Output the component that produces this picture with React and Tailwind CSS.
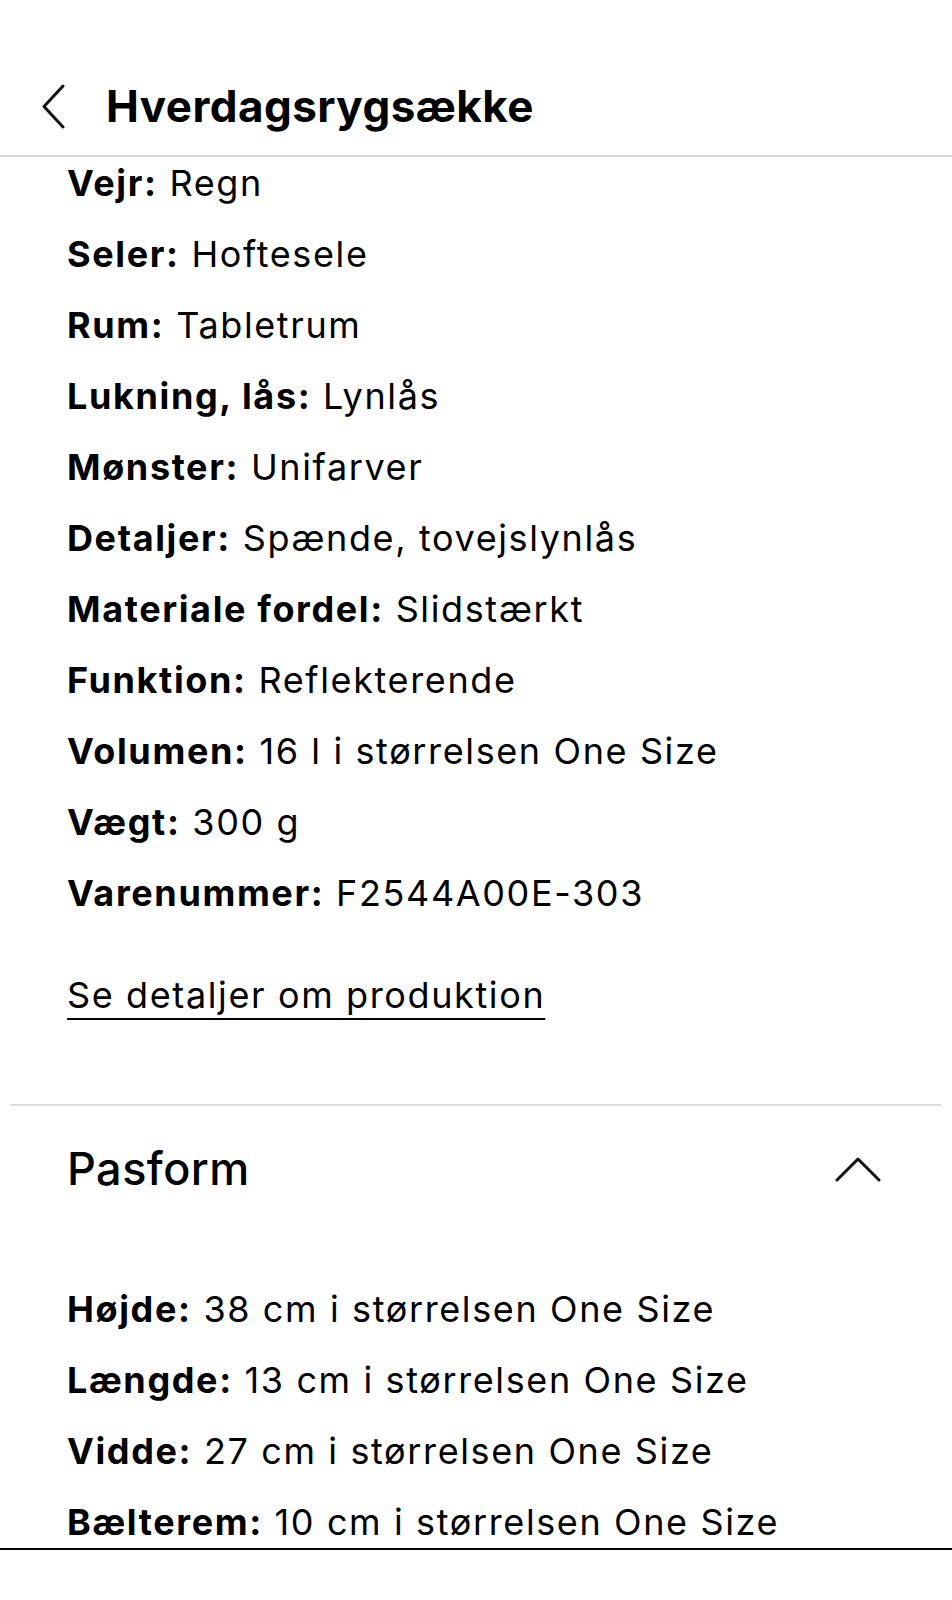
import React from "react";

const details = [
  ["Vejr:", "Regn"],
  ["Seler:", "Hoftesele"],
  ["Rum:", "Tabletrum"],
  ["Lukning, lås:", "Lynlås"],
  ["Mønster:", "Unifarver"],
  ["Detaljer:", "Spænde, tovejslynlås"],
  ["Materiale fordel:", "Slidstærkt"],
  ["Funktion:", "Reflekterende"],
  ["Volumen:", "16 l i størrelsen One Size"],
  ["Vægt:", "300 g"],
  ["Varenummer:", "F2544A00E-303"],
];

const fit = [
  ["Højde:", "38 cm i størrelsen One Size"],
  ["Længde:", "13 cm i størrelsen One Size"],
  ["Vidde:", "27 cm i størrelsen One Size"],
  ["Bælterem:", "10 cm i størrelsen One Size"],
];

const Row = ({ label, value }) => (
  <div className="h-[71px] flex items-center whitespace-nowrap">
    <span className="font-bold">{label}</span>
    <span>&nbsp;{value}</span>
  </div>
);

const App = () => {
  return (
    <div className="w-full h-[1600px] bg-white text-black font-['Inter','Liberation_Sans',sans-serif] overflow-hidden flex flex-col">
      <div className="flex-1 overflow-hidden flex flex-col">
        {/* Header */}
        <div className="pt-[57px]">
          <div className="h-[100px] flex items-center border-b-2 border-[#d4d4d8]">
            <button className="ml-[40px] w-[26px] h-[46px] flex items-center justify-center">
              <svg width="24" height="45" viewBox="0 0 24 45" fill="none">
                <path d="M22 2L3 22.5L22 43" stroke="#111" strokeWidth="3" strokeLinecap="round" strokeLinejoin="round" />
              </svg>
            </button>
            <h1 className="ml-[40px] text-[44px] font-bold tracking-[0.01em]">
              Hverdagsrygsække
            </h1>
          </div>
        </div>

        {/* Details */}
        <div className="px-[67px] -mt-[10px] text-[36px] tracking-[0.045em]">
          {details.map(([l, v]) => (
            <Row key={l} label={l} value={v} />
          ))}
          <div className="mt-[31px] h-[71px] flex items-center">
            <a className="underline decoration-2 underline-offset-[10px] tracking-[0.045em]">
              Se detaljer om produktion
            </a>
          </div>
        </div>

        {/* Pasform */}
        <div className="mt-[74px] mx-[10px] mr-[11px] border-t-2 border-[#dcdde0]">
          <div className="h-[126px] flex items-center justify-between pl-[57px] pr-[60px]">
            <h2 className="text-[45px] font-medium tracking-[0.01em]">Pasform</h2>
            <svg width="46" height="26" viewBox="0 0 46 26" fill="none">
              <path d="M2 24L23 3L44 24" stroke="#111" strokeWidth="3" strokeLinecap="round" strokeLinejoin="round" />
            </svg>
          </div>
        </div>
        <div className="px-[67px] mt-[41px] text-[36px] tracking-[0.045em]">
          {fit.map(([l, v]) => (
            <Row key={l} label={l} value={v} />
          ))}
        </div>
      </div>

      <div className="h-[52px] shrink-0 border-t-2 border-black bg-white" />
    </div>
  );
};

export default App;
